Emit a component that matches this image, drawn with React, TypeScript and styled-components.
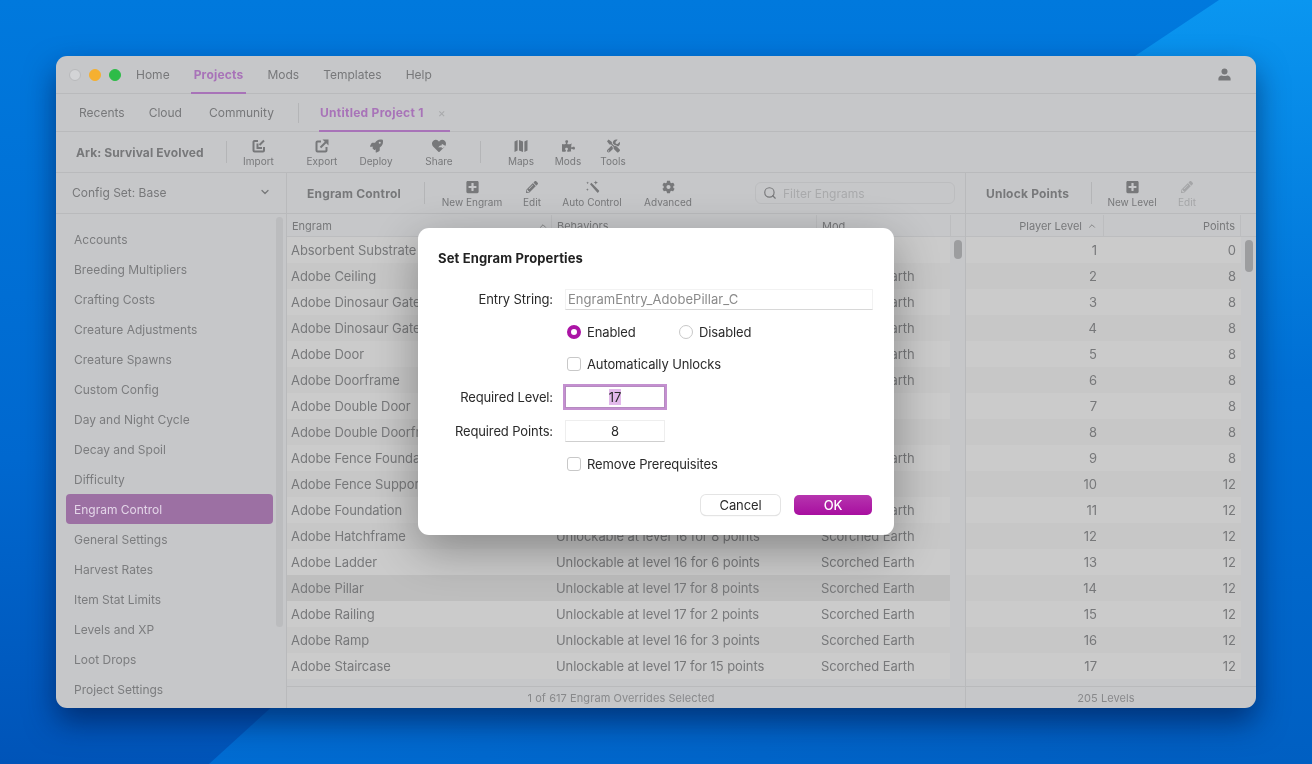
import React from "react";
import styled, {createGlobalStyle} from "styled-components";
import {FaCog, FaHeart, FaPencilAlt, FaPlusSquare, FaPuzzlePiece, FaRocket, FaTools} from "react-icons/fa";
import {LuChevronDown, LuChevronUp, LuSearch} from "react-icons/lu";

const GlobalStyle = createGlobalStyle`
  html, body {
    margin: 0;
    width: 1312px;
    height: 764px;
    overflow: hidden;
    font-family: "Inter", "Liberation Sans", sans-serif;
  }
  * { box-sizing: border-box; }
`;

const MENU = ["Home", "Projects", "Mods", "Templates", "Help"];
const SIDEBAR = [
    "Accounts", "Breeding Multipliers", "Crafting Costs", "Creature Adjustments", "Creature Spawns",
    "Custom Config", "Day and Night Cycle", "Decay and Spoil", "Difficulty", "Engram Control",
    "General Settings", "Harvest Rates", "Item Stat Limits", "Levels and XP", "Loot Drops", "Project Settings",
];
// rows 1-11 have their behaviors hidden behind the dialog
const ENGRAMS = [
    {name: "Absorbent Substrate", behavior: "", mod: ""},
    {name: "Adobe Ceiling", behavior: "", mod: "Scorched Earth"},
    {name: "Adobe Dinosaur Gate", behavior: "", mod: "Scorched Earth"},
    {name: "Adobe Dinosaur Gateway", behavior: "", mod: "Scorched Earth"},
    {name: "Adobe Door", behavior: "", mod: "Scorched Earth"},
    {name: "Adobe Doorframe", behavior: "", mod: "Scorched Earth"},
    {name: "Adobe Double Door", behavior: "", mod: ""},
    {name: "Adobe Double Doorframe", behavior: "", mod: ""},
    {name: "Adobe Fence Foundation", behavior: "", mod: "Scorched Earth"},
    {name: "Adobe Fence Support", behavior: "", mod: ""},
    {name: "Adobe Foundation", behavior: "", mod: "Scorched Earth"},
    {name: "Adobe Hatchframe", behavior: "Unlockable at level 16 for 8 points", mod: "Scorched Earth"},
    {name: "Adobe Ladder", behavior: "Unlockable at level 16 for 6 points", mod: "Scorched Earth"},
    {name: "Adobe Pillar", behavior: "Unlockable at level 17 for 8 points", mod: "Scorched Earth", selected: true},
    {name: "Adobe Railing", behavior: "Unlockable at level 17 for 2 points", mod: "Scorched Earth"},
    {name: "Adobe Ramp", behavior: "Unlockable at level 16 for 3 points", mod: "Scorched Earth"},
    {name: "Adobe Staircase", behavior: "Unlockable at level 17 for 15 points", mod: "Scorched Earth"},
];
const LEVELS = [0, 8, 8, 8, 8, 8, 8, 8, 8, 12, 12, 12, 12, 12, 12, 12, 12];

const ImportIcon = () => (
    <svg width="14" height="14" viewBox="0 0 14 14">
        <path d="M6 2H2.5A1 1 0 0 0 1.5 3V11.5A1 1 0 0 0 2.5 12.5H11A1 1 0 0 0 12 11.5V8" fill="none" stroke="currentColor" strokeWidth="2" />
        <path d="M12 1.5L7.5 6" stroke="currentColor" strokeWidth="2" />
        <path d="M4.5 4.5V10H10V8H6.5V4.5Z" fill="currentColor" />
    </svg>
);

const ExportIcon = () => (
    <svg width="14" height="14" viewBox="0 0 14 14">
        <path d="M6 2.5H2.5A1 1 0 0 0 1.5 3.5V11.5A1 1 0 0 0 2.5 12.5H10.5A1 1 0 0 0 11.5 11.5V8" fill="none" stroke="currentColor" strokeWidth="2" />
        <path d="M5.5 8.5L11 3" stroke="currentColor" strokeWidth="2" />
        <path d="M7.5 0.5H13.5V6.5L11.5 4.5L9.5 2.5Z" fill="currentColor" />
    </svg>
);

const MapsIcon = () => (
    <svg width="14" height="14" viewBox="0 0 14 14">
        <path d="M0.5 2.5L3.6 1V11.6L0.5 13ZM5 1L9 2.6V13L5 11.4ZM10.4 2.6L13.5 1V11.6L10.4 13Z" fill="currentColor" />
    </svg>
);

const ShareIcon = () => (
    <ShareWrap>
        <FaHeart size={14} />
        <ShareCut viewBox="0 0 14 14" width="14" height="14">
            <path d="M6.4 8.6C7 7 8.2 6.2 9.8 6.2V4.8L14 7.2L9.8 9.6V8.2C8.4 8.1 7.3 8.2 6.4 8.6Z" fill="#c6c7c9" />
        </ShareCut>
    </ShareWrap>
);

const MagicIcon = () => (
    <svg width="15" height="14" viewBox="0 0 15 14">
        <path d="M5 4.2L6.4 2.8L14 10.6C14.3 10.9 14.3 11.3 14 11.6L13.2 12.4C12.9 12.7 12.5 12.7 12.2 12.4Z" fill="currentColor" />
        <path d="M10.8 0.4L11.4 2L13 2.6L11.4 3.2L10.8 4.8L10.2 3.2L8.6 2.6L10.2 2Z" fill="currentColor" />
        <path d="M2.6 1.4L3 2.4L4 2.8L3 3.2L2.6 4.2L2.2 3.2L1.2 2.8L2.2 2.4Z" fill="currentColor" />
        <path d="M2.4 8.2L2.8 9.2L3.8 9.6L2.8 10L2.4 11L2 10L1 9.6L2 9.2Z" fill="currentColor" />
    </svg>
);

const UserIcon = () => (
    <svg width="13" height="13" viewBox="0 0 13 13">
        <circle cx="6.5" cy="3.4" r="3" fill="currentColor" />
        <path d="M0.4 12.6V10.4C0.4 8.8 2 7.6 3.8 7.4C5.4 8.3 7.6 8.3 9.2 7.4C11 7.6 12.6 8.8 12.6 10.4V12.6Z" fill="currentColor" />
    </svg>
);

const Wallpaper = () => (
    <WallpaperSvg viewBox="0 0 1312 764">
        <defs>
            <linearGradient id="base" x1="0" y1="0" x2="0" y2="1">
                <stop offset="0" stopColor="#0079dd" />
                <stop offset="0.6" stopColor="#0068cf" />
                <stop offset="1" stopColor="#0054b8" />
            </linearGradient>
            <linearGradient id="band" x1="0" y1="0" x2="0" y2="1">
                <stop offset="0" stopColor="#0a96f0" />
                <stop offset="0.5" stopColor="#006fd4" />
                <stop offset="1" stopColor="#005fc2" />
            </linearGradient>
            <linearGradient id="low" x1="0" y1="0" x2="1" y2="0">
                <stop offset="0" stopColor="#006cd2" />
                <stop offset="1" stopColor="#005cbe" />
            </linearGradient>
        </defs>
        <rect width="1312" height="764" fill="url(#base)" />
        <path d="M209 764L275 704H1312V764Z" fill="url(#low)" />
        <path d="M1135 56L1219 0H1312V764H1200V56Z" fill="url(#band)" />
    </WallpaperSvg>
);

const App = () => {
    return (
        <>
            <GlobalStyle />
            <Wallpaper />
            <Desktop>
                <Window>
                    <NavBar>
                        <Lights>
                            <Light $color="#d3d4d6" $edge="#b9babc" />
                            <Light $color="#f5b030" />
                            <Light $color="#2ebc48" />
                        </Lights>
                        {MENU.map((m) => (
                            <NavItem key={m} $active={m === "Projects"}>{m}</NavItem>
                        ))}
                        <UserSlot><UserIcon /></UserSlot>
                    </NavBar>
                    <TabBar>
                        <TabItem>Recents</TabItem>
                        <TabItem $right={15}>Cloud</TabItem>
                        <TabItem>Community</TabItem>
                        <TabDivider />
                        <ActiveTab>
                            Untitled Project 1
                            <TabClose>×</TabClose>
                        </ActiveTab>
                    </TabBar>
                    <ProjectBar>
                        <ProjectTitle>Ark: Survival Evolved</ProjectTitle>
                        <BarDivider />
                        <ToolButton $width={63}><ImportIcon /><span>Import</span></ToolButton>
                        <ToolButton $width={64}><ExportIcon /><span>Export</span></ToolButton>
                        <ToolButton $width={44}><FaRocket size={13} /><span>Deploy</span></ToolButton>
                        <ToolButton $width={82}><ShareIcon /><span>Share</span></ToolButton>
                        <BarDivider />
                        <ToolGroup>
                            <ToolButton $width={46}><MapsIcon /><span>Maps</span></ToolButton>
                            <ToolButton $width={48}><FaPuzzlePiece size={13} /><span>Mods</span></ToolButton>
                            <ToolButton $width={42}><FaTools size={13} /><span>Tools</span></ToolButton>
                        </ToolGroup>
                    </ProjectBar>
                    <Main>
                        <Sidebar>
                            <ConfigRow>
                                Config Set: Base
                                <LuChevronDown size={12} strokeWidth={2.5} />
                            </ConfigRow>
                            <SideList>
                                {SIDEBAR.map((s) => (
                                    <SideItem key={s} $active={s === "Engram Control"}>{s}</SideItem>
                                ))}
                                <SideScroll />
                            </SideList>
                        </Sidebar>
                        <EngramPanel>
                            <PanelBar>
                                <PanelTitle $width={117}>Engram Control</PanelTitle>
                                <BarDivider />
                                <ToolButton $width={94}><FaPlusSquare size={13} /><span>New Engram</span></ToolButton>
                                <ToolButton $width={26}><FaPencilAlt size={12} /><span>Edit</span></ToolButton>
                                <ToolButton $width={94}><MagicIcon /><span>Auto Control</span></ToolButton>
                                <ToolButton $width={58}><FaCog size={13} /><span>Advanced</span></ToolButton>
                                <SearchBox>
                                    <LuSearch size={14} />
                                    <span>Filter Engrams</span>
                                </SearchBox>
                            </PanelBar>
                            <Table>
                                <EngramHeader>
                                    <HeadCell>
                                        Engram
                                        <SortMark><LuChevronUp size={10} /></SortMark>
                                    </HeadCell>
                                    <HeadCell>Behaviors</HeadCell>
                                    <HeadCell>Mod</HeadCell>
                                </EngramHeader>
                                <RowList>
                                    {ENGRAMS.map((e, i) => (
                                        <EngramRow key={e.name} $odd={i % 2 === 1} $selected={e.selected}>
                                            <Cell>{e.name}</Cell>
                                            <Cell>{e.behavior}</Cell>
                                            <Cell>{e.mod}</Cell>
                                        </EngramRow>
                                    ))}
                                    <ScrollThumb $height={19} />
                                </RowList>
                            </Table>
                            <StatusBar>1 of 617 Engram Overrides Selected</StatusBar>
                        </EngramPanel>
                        <PointsPanel>
                            <PanelBar>
                                <PanelTitle $width={105}>Unlock Points</PanelTitle>
                                <BarDivider />
                                <ToolButton $width={80}><FaPlusSquare size={13} /><span>New Level</span></ToolButton>
                                <ToolButton $width={30} $disabled><FaPencilAlt size={12} /><span>Edit</span></ToolButton>
                            </PanelBar>
                            <Table>
                                <PointsHeader>
                                    <LevelHead>
                                        Player Level
                                        <LuChevronUp size={10} />
                                    </LevelHead>
                                    <PointsHead>Points</PointsHead>
                                </PointsHeader>
                                <RowList>
                                    {LEVELS.map((p, i) => (
                                        <PointsRow key={i} $odd={i % 2 === 1}>
                                            <NumCell $pad={7}>{i + 1}</NumCell>
                                            <NumCell $pad={5}>{p}</NumCell>
                                        </PointsRow>
                                    ))}
                                    <ScrollThumb $height={32} />
                                </RowList>
                            </Table>
                            <StatusBar>205 Levels</StatusBar>
                        </PointsPanel>
                    </Main>
                </Window>
                <Dialog>
                    <DialogTitle>Set Engram Properties</DialogTitle>
                    <FormRow $height={22} $top={21}>
                        <FieldLabel>Entry String:</FieldLabel>
                        <EntryField>EngramEntry_AdobePillar_C</EntryField>
                    </FormRow>
                    <FormRow $height={22} $top={11}>
                        <FieldLabel />
                        <RadioGroup>
                            <Option $width={110}><Radio $checked />Enabled</Option>
                            <Option><Radio />Disabled</Option>
                        </RadioGroup>
                    </FormRow>
                    <FormRow $height={22} $top={10}>
                        <FieldLabel />
                        <Option><Check />Automatically Unlocks</Option>
                    </FormRow>
                    <FormRow $height={24} $top={10}>
                        <FieldLabel>Required Level:</FieldLabel>
                        <NumberField $focused><Selected>17</Selected></NumberField>
                    </FormRow>
                    <FormRow $height={24} $top={10}>
                        <FieldLabel>Required Points:</FieldLabel>
                        <NumberField>8</NumberField>
                    </FormRow>
                    <FormRow $height={22} $top={10}>
                        <FieldLabel />
                        <Option><Check />Remove Prerequisites</Option>
                    </FormRow>
                    <DialogButtons>
                        <CancelButton>Cancel</CancelButton>
                        <OkButton>OK</OkButton>
                    </DialogButtons>
                </Dialog>
            </Desktop>
        </>
    );
};

export default App;

const WallpaperSvg = styled.svg`
  position: fixed;
  left: 0;
  top: 0;
  width: 1312px;
  height: 764px;
`;

const Desktop = styled.div`
  position: relative;
  width: 1312px;
  height: 764px;
  padding: 56px 56px;
  will-change: transform;
`;

const Window = styled.div`
  display: flex;
  flex-direction: column;
  width: 1200px;
  height: 652px;
  background: #c6c7c9;
  border-radius: 11px;
  overflow: hidden;
  color: #77787a;
  box-shadow: 0 14px 30px rgba(0, 15, 60, 0.55);
`;

const NavBar = styled.div`
  display: flex;
  align-items: stretch;
  height: 38px;
  flex: none;
  padding: 0 25px 0 13px;
  border-bottom: 1px solid #b9babc;
  font-size: 12px;
`;

const Lights = styled.div`
  display: flex;
  align-items: center;
  gap: 8px;
  margin-right: 12px;
`;

const Light = styled.div<{$color: string; $edge?: string}>`
  width: 12px;
  height: 12px;
  border-radius: 50%;
  background: ${(props) => props.$color};
  border: 1px solid ${(props) => props.$edge || props.$color};
`;

const NavItem = styled.div<{$active?: boolean}>`
  display: flex;
  align-items: center;
  padding: 0 3px;
  margin-right: 18px;
  font-weight: ${(props) => (props.$active ? 700 : 400)};
  letter-spacing: ${(props) => (props.$active ? "0.2px" : "0")};
  color: ${(props) => (props.$active ? "#a873b8" : "#77787a")};
  border-bottom: 2px solid ${(props) => (props.$active ? "#a873b8" : "transparent")};
  margin-bottom: -1px;
`;

const UserSlot = styled.div`
  margin-left: auto;
  display: flex;
  align-items: center;
`;

const TabBar = styled.div`
  display: flex;
  align-items: stretch;
  height: 38px;
  flex: none;
  padding-left: 11px;
  border-bottom: 1px solid #b9babc;
  font-size: 12px;
`;

const TabItem = styled.div<{$right?: number}>`
  display: flex;
  align-items: center;
  padding: 0 ${(props) => props.$right || 12}px 0 12px;
`;

const TabDivider = styled.div`
  width: 1px;
  height: 20px;
  margin: 9px 20px 0 12px;
  background: #b4b5b7;
`;

const ActiveTab = styled.div`
  display: flex;
  align-items: center;
  padding: 0 0 0 1px;
  width: 131px;
  font-weight: 700;
  letter-spacing: 0.28px;
  white-space: nowrap;
  color: #a873b8;
  border-bottom: 2px solid #a873b8;
  margin-bottom: -1px;
`;

const TabClose = styled.span`
  margin-left: 14px;
  color: #a9aaac;
  font-weight: 400;
  font-size: 12px;
`;

const ProjectBar = styled.div`
  display: flex;
  align-items: center;
  height: 41px;
  flex: none;
  padding-left: 20px;
  border-bottom: 1px solid #b9babc;
`;

const ProjectTitle = styled.div`
  width: 150px;
  font-size: 12px;
  font-weight: 700;
  letter-spacing: 0.1px;
`;

const BarDivider = styled.div`
  width: 1px;
  height: 22px;
  flex: none;
  background: #b4b5b7;
`;

const ToolGroup = styled.div`
  display: flex;
  margin-left: 17px;
`;

const ToolButton = styled.div<{$width: number; $disabled?: boolean}>`
  display: flex;
  flex-direction: column;
  align-items: center;
  justify-content: center;
  gap: 2px;
  width: ${(props) => props.$width}px;
  flex: none;
  height: 40px;
  padding-top: 2px;
  font-size: 10px;
  white-space: nowrap;
  color: ${(props) => (props.$disabled ? "#a5a6a8" : "#77787a")};
  span {
    line-height: 12px;
  }
  svg {
    height: 14px;
  }
`;

const ShareWrap = styled.div`
  position: relative;
  display: flex;
  height: 14px;
`;

const ShareCut = styled.svg`
  position: absolute;
  left: 0;
  top: 0;
`;

const Main = styled.div`
  display: flex;
  flex: 1;
  min-height: 0;
`;

const Sidebar = styled.div`
  display: flex;
  flex-direction: column;
  width: 231px;
  flex: none;
  border-right: 1px solid #b9babc;
`;

const ConfigRow = styled.div`
  display: flex;
  align-items: center;
  justify-content: space-between;
  height: 41px;
  flex: none;
  padding: 0 15px 2px 16px;
  font-size: 12px;
  border-bottom: 1px solid #b9babc;
`;

const SideList = styled.div`
  position: relative;
  flex: 1;
  padding: 10px 13px 0 10px;
  overflow: hidden;
`;

const SideItem = styled.div<{$active?: boolean}>`
  display: flex;
  align-items: center;
  height: 30px;
  padding-left: 8px;
  border-radius: 4px;
  font-size: 12px;
  color: ${(props) => (props.$active ? "#e3d5e8" : "#7b7c7e")};
  background: ${(props) => (props.$active ? "#9c70a3" : "transparent")};
`;

const SideScroll = styled.div`
  position: absolute;
  right: 3px;
  top: 3px;
  width: 7px;
  height: 410px;
  border-radius: 4px;
  background: #bbbcbe;
`;

const EngramPanel = styled.div`
  display: flex;
  flex-direction: column;
  width: 679px;
  flex: none;
  border-right: 1px solid #b9babc;
`;

const PointsPanel = styled.div`
  display: flex;
  flex-direction: column;
  flex: 1;
`;

const PanelBar = styled.div`
  display: flex;
  align-items: center;
  height: 41px;
  flex: none;
  padding-left: 20px;
  border-bottom: 1px solid #b9babc;
`;

const PanelTitle = styled.div<{$width: number}>`
  width: ${(props) => props.$width}px;
  font-size: 12px;
  font-weight: 700;
  letter-spacing: 0.2px;
  white-space: nowrap;
  flex: none;
`;

const SearchBox = styled.div`
  display: flex;
  align-items: center;
  gap: 6px;
  width: 200px;
  height: 22px;
  margin-left: 58px;
  padding-left: 7px;
  border: 1px solid #bcbdbf;
  border-radius: 6px;
  font-size: 12px;
  color: #a9aaac;
  svg {
    color: #77787a;
  }
`;

const Table = styled.div`
  display: flex;
  flex-direction: column;
  flex: 1;
  min-height: 0;
`;

const HeaderRow = styled.div`
  height: 23px;
  flex: none;
  padding-top: 1px;
  border-bottom: 1px solid #bcbdbf;
  font-size: 11px;
`;

const EngramHeader = styled(HeaderRow)`
  display: grid;
  grid-template-columns: 265px 265px 134px 14px;
`;

const HeadCell = styled.div`
  position: relative;
  display: flex;
  align-items: center;
  padding-left: 5px;
  border-right: 1px solid #bcbdbf;
`;

const SortMark = styled.span`
  position: absolute;
  right: 3px;
  top: 6px;
  display: flex;
`;

const RowList = styled.div`
  position: relative;
  flex: 1;
  min-height: 0;
  overflow: hidden;
`;

const EngramRow = styled.div<{$odd: boolean; $selected?: boolean}>`
  display: grid;
  grid-template-columns: 265px 265px 133px;
  width: 663px;
  height: 26px;
  align-items: center;
  font-size: 13px;
  letter-spacing: -0.08px;
  background: ${(props) => (props.$selected ? "#bebebe" : props.$odd ? "#c7c7c7" : "#cbcbcb")};
`;

const Cell = styled.div`
  padding-left: 4px;
  white-space: nowrap;
  overflow: hidden;
`;

const ScrollThumb = styled.div<{$height: number}>`
  position: absolute;
  right: 3px;
  top: 3px;
  width: 8px;
  height: ${(props) => props.$height}px;
  border-radius: 4px;
  background: #9c9d9f;
`;

const PointsHeader = styled(HeaderRow)`
  display: grid;
  grid-template-columns: 138px 137px 15px;
`;

const LevelHead = styled.div`
  display: flex;
  align-items: center;
  justify-content: flex-end;
  gap: 5px;
  padding-right: 6px;
  border-right: 1px solid #bcbdbf;
`;

const PointsHead = styled.div`
  display: flex;
  align-items: center;
  justify-content: flex-end;
  padding-right: 5px;
  border-right: 1px solid #bcbdbf;
`;

const PointsRow = styled.div<{$odd: boolean}>`
  display: grid;
  grid-template-columns: 138px 137px;
  width: 275px;
  height: 26px;
  align-items: center;
  font-size: 13px;
  background: ${(props) => (props.$odd ? "#c7c7c7" : "#cbcbcb")};
`;

const NumCell = styled.div<{$pad: number}>`
  text-align: right;
  padding-right: ${(props) => props.$pad}px;
`;

const StatusBar = styled.div`
  display: flex;
  align-items: center;
  justify-content: center;
  height: 22px;
  flex: none;
  padding-right: 10px;
  border-top: 1px solid #b9babc;
  font-size: 11px;
  letter-spacing: 0.08px;
  color: #88898b;
`;

const Dialog = styled.div`
  position: absolute;
  left: 418px;
  top: 228px;
  width: 476px;
  height: 307px;
  padding: 21px 21px 0 20px;
  background: #ffffff;
  border-radius: 11px;
  box-shadow: 0 14px 46px rgba(0, 0, 0, 0.32);
  color: #2a2a2a;
  font-size: 13px;
  letter-spacing: -0.12px;
`;

const DialogTitle = styled.div`
  height: 18px;
  line-height: 18px;
  font-size: 13px;
  font-weight: 700;
  letter-spacing: 0.14px;
  color: #222222;
`;

const FormRow = styled.div<{$height: number; $top: number}>`
  display: flex;
  align-items: center;
  height: ${(props) => props.$height}px;
  margin-top: ${(props) => props.$top}px;
`;

const FieldLabel = styled.div`
  width: 115px;
  flex: none;
  margin-right: 12px;
  text-align: right;
  white-space: nowrap;
`;

const EntryField = styled.div`
  display: flex;
  align-items: center;
  width: 308px;
  height: 21px;
  padding-left: 2px;
  border: 1px solid #f2f2f2;
  border-bottom-color: #d8d8d8;
  letter-spacing: 0.04px;
  color: #8a8a8a;
`;

const RadioGroup = styled.div`
  display: flex;
`;

const Option = styled.div<{$width?: number}>`
  display: flex;
  align-items: center;
  gap: 6px;
  margin-left: 2px;
  ${(props) => (props.$width ? `width: ${props.$width}px;` : "")}
`;

const Radio = styled.span<{$checked?: boolean}>`
  width: 14px;
  height: 14px;
  flex: none;
  border-radius: 50%;
  background: #ffffff;
  border: ${(props) => (props.$checked ? "4px solid #ab14a5" : "1px solid #c8c8c8")};
`;

const Check = styled.span`
  width: 14px;
  height: 14px;
  flex: none;
  border-radius: 3px;
  border: 1px solid #c8c8c8;
  background: #ffffff;
`;

const NumberField = styled.div<{$focused?: boolean}>`
  display: flex;
  align-items: center;
  justify-content: center;
  width: 100px;
  height: 22px;
  border: 1px solid #eeeeee;
  border-bottom-color: #cfcfcf;
  ${(props) => (props.$focused ? "box-shadow: 0 0 0 2px #c490d0; border-color: #b58ac0;" : "")}
`;

const Selected = styled.span`
  background: #e2b9ea;
  line-height: 16px;
`;

const DialogButtons = styled.div`
  display: flex;
  justify-content: flex-end;
  gap: 14px;
  margin-top: 20px;
  padding-right: 1px;
`;

const CancelButton = styled.div`
  display: flex;
  align-items: center;
  justify-content: center;
  width: 79px;
  height: 20px;
  border-radius: 5px;
  background: #ffffff;
  box-shadow: 0 0 0 1px #e4e4e4, 0 1px 1px rgba(0, 0, 0, 0.2);
`;

const OkButton = styled.div`
  display: flex;
  align-items: center;
  justify-content: center;
  width: 78px;
  height: 20px;
  border-radius: 5px;
  font-weight: 500;
  color: #ffffff;
  background: linear-gradient(#b635ae, #a80fa0);
`;
